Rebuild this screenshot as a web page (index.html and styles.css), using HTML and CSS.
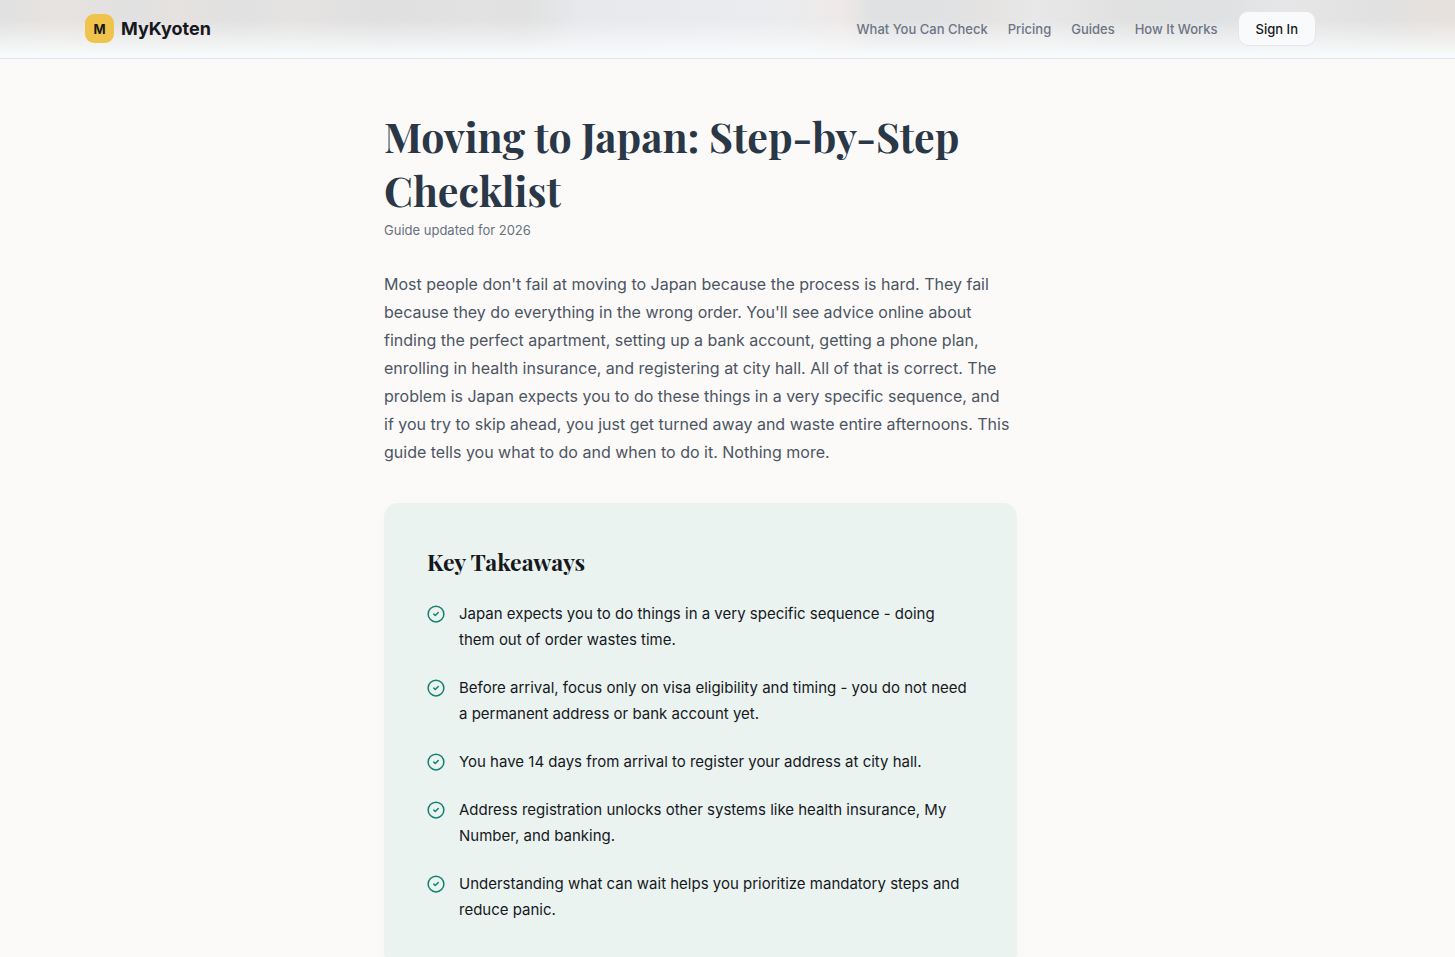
FILE: index.html
```html
<!DOCTYPE html>
<html lang="en">
<head>
  <meta charset="UTF-8" />
  <meta name="viewport" content="width=device-width, initial-scale=1.0"/>
  <title>Moving to Japan: Step-by-Step Checklist | MyKyoten</title>
  <link rel="stylesheet" href="styles.css">
</head>
<body>

<!-- shared check icon -->
<svg class="sprite" width="0" height="0" aria-hidden="true">
  <symbol id="check" viewBox="0 0 24 24" fill="none" stroke="currentColor" stroke-width="2" stroke-linecap="round" stroke-linejoin="round">
    <circle cx="12" cy="12" r="10.5"/>
    <path d="M9 12l2 2 4-4"/>
  </symbol>
</svg>

<header class="site-header">
  <div class="header-inner">
    <a class="brand" href="#">
      <span class="brand-mark">M</span>
      <span class="brand-name">MyKyoten</span>
    </a>
    <nav class="nav">
      <a href="#">What You Can Check</a>
      <a href="#">Pricing</a>
      <a href="#">Guides</a>
      <a href="#">How It Works</a>
      <button class="sign-in" type="button">Sign In</button>
    </nav>
  </div>
</header>

<main class="page">
  <article class="article">
    <h1>Moving to Japan: Step-by-Step Checklist</h1>
    <p class="updated">Guide updated for 2026</p>

    <p class="intro">Most people don't fail at moving to Japan because the process is hard. They fail because they do everything in the wrong order. You'll see advice online about finding the perfect apartment, setting up a bank account, getting a phone plan, enrolling in health insurance, and registering at city hall. All of that is correct. The problem is Japan expects you to do these things in a very specific sequence, and if you try to skip ahead, you just get turned away and waste entire afternoons. This guide tells you what to do and when to do it. Nothing more.</p>

    <section class="takeaways">
      <h2>Key Takeaways</h2>
      <ul>
        <li><svg class="icon"><use href="#check"/></svg><span>Japan expects you to do things in a very specific sequence - doing them out of order wastes time.</span></li>
        <li><svg class="icon"><use href="#check"/></svg><span>Before arrival, focus only on visa eligibility and timing - you do not need a permanent address or bank account yet.</span></li>
        <li><svg class="icon"><use href="#check"/></svg><span>You have 14 days from arrival to register your address at city hall.</span></li>
        <li><svg class="icon"><use href="#check"/></svg><span>Address registration unlocks other systems like health insurance, My Number, and banking.</span></li>
        <li><svg class="icon"><use href="#check"/></svg><span>Understanding what can wait helps you prioritize mandatory steps and reduce panic.</span></li>
      </ul>
    </section>
  </article>
</main>

</body>
</html>
```

FILE: styles.css
```css
* {
  box-sizing: border-box;
}
body {
  margin: 0;
  font-family: Inter, "Liberation Sans", sans-serif;
  background-color: #fcfaf8;
  color: #16181d;
}
h1, h2, p, ul {
  margin: 0;
}
a {
  color: inherit;
  text-decoration: none;
}
.sprite {
  position: absolute;
}

/* header */
.site-header,
.page {
  padding-right: 54px;
}
.site-header {
  padding-bottom: 1px;
  border-bottom: 1px solid #e1e4ec;
  background:
    linear-gradient(to bottom, rgba(248,250,251,0) 35%, rgba(248,250,251,0.5) 66%, #f8fafb 95%),
    linear-gradient(to right, #e1e1e1 0%, #e7e3e0 4%, #e1e1e1 9%, #e5e2e0 12%, #e1e1e1 17%, #e5e3e2 20%, #e0e0e0 26%, #e2e2e2 33%, #e1e1e1 36%, #e7e9ed 40%, #e9ebef 50%, #ebecee 54%, #eee9e8 58%, #e0e1e2 60%, #dfe1e3 64%, #e5e3e2 68%, #e8e8e8 71%, #e1e1e1 77%, #dfe1e2 84%, #e6e6e6 88%, #e2e1e1 95%, #e6e1dd 99%);
}
.header-inner {
  display: flex;
  align-items: center;
  justify-content: space-between;
  max-width: 1231px;
  height: 57px;
  margin: 0 auto;
}
.brand {
  display: flex;
  align-items: center;
  gap: 7px;
}
.brand-mark {
  display: flex;
  align-items: center;
  justify-content: center;
  width: 29px;
  height: 29px;
  border-radius: 9px;
  background: #f0c44c;
  font-size: 13px;
  font-weight: 700;
}
.brand-name {
  font-size: 18px;
  font-weight: 700;
}
.nav {
  display: flex;
  align-items: center;
  gap: 20px;
  font-size: 13px;
  font-weight: 500;
  color: #6e7485;
}
.sign-in {
  height: 35px;
  padding: 0 17px;
  border: 1px solid #e3e6eb;
  border-radius: 10px;
  background: #f9fafc;
  color: #16181d;
  font: inherit;
}

/* article */
.article {
  max-width: 633px;
  margin: 0 auto;
  padding-top: 50px;
}
h1, h2 {
  font-family: "Playfair Display", "Liberation Serif", serif;
  font-weight: 700;
}
h1 {
  font-size: 41px;
  line-height: 54px;
  color: #2a3746;
}
.updated {
  margin-top: 3px;
  font-size: 13px;
  line-height: 20px;
  color: #67717f;
}
.intro {
  max-width: 628px;
  margin-top: 30px;
  font-size: 16px;
  line-height: 28px;
  color: #4b5563;
}

/* key takeaways card */
.takeaways {
  margin-top: 37px;
  padding: 43px;
  border-radius: 14px;
  background: #eaf3f0;
  box-shadow: 0 4px 20px rgba(0,0,0,0.02);
}
.takeaways h2 {
  font-size: 23px;
  line-height: 32px;
}
.takeaways ul {
  display: flex;
  flex-direction: column;
  gap: 22px;
  margin-top: 23px;
  padding: 0;
  list-style: none;
}
.takeaways li {
  display: flex;
  gap: 14px;
  font-size: 15px;
  line-height: 26px;
}
.icon {
  flex: none;
  width: 18px;
  height: 18px;
  margin-top: 4px;
  color: #15806f;
}
```
